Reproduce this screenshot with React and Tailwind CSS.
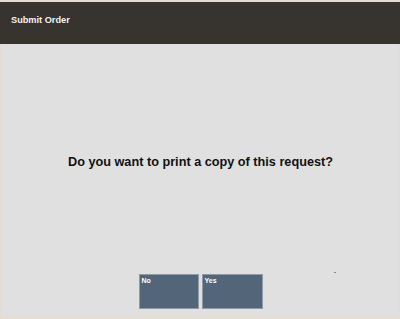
export default function App() {
  return (
    <div className="flex h-[319px] w-[400px] flex-col bg-[#e4ddd4] pt-[2px] font-['Liberation_Sans',Arial,sans-serif]">
      <div className="h-[42px] bg-[#37342f] pl-[11px] pt-[12px]">
        <span className="block text-[9.2px] font-bold leading-[12px] text-[#f2f2f2]">Submit Order</span>
      </div>
      <div className="relative mb-[3px] ml-[2px] mr-[1px] flex flex-1 flex-col items-center bg-[#e0e0e0]">
        <p className="mt-[110px] text-[12.7px] font-bold leading-[16px] text-[#111]">
          Do you want to print a copy of this request?
        </p>
        <div className="mt-[104px] flex gap-[3px]">
          <button className="h-[35px] w-[60px] border border-[#8f9aa5] bg-[#536579] px-[2px] pt-[1px] text-left align-top text-[7px] font-bold leading-[9px] text-white">
            <span className="block h-full">No</span>
          </button>
          <button className="h-[35px] w-[61px] border border-[#8f9aa5] bg-[#536579] px-[2px] pt-[1px] text-left text-[7px] font-bold leading-[9px] text-white">
            <span className="block h-full">Yes</span>
          </button>
        </div>
        <span className="absolute left-[332px] top-[228px] h-px w-[2px] bg-[#8a8a8a]" />
      </div>
    </div>
  );
}
